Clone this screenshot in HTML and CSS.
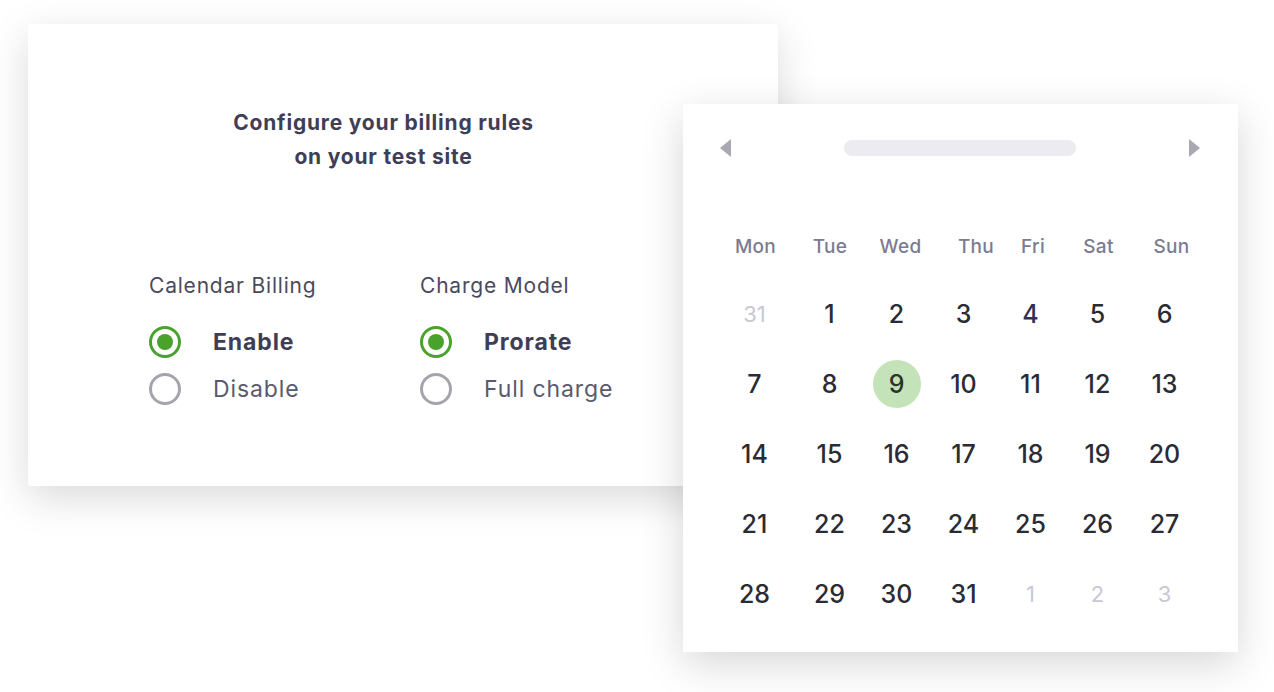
FILE: index.html
```html
<!DOCTYPE html>
<html lang="en">
<head>
    <meta charset="UTF-8">
    <meta name="viewport" content="width=device-width, initial-scale=1.0">
    <title>Billing rules</title>
    <link rel="stylesheet" href="styles.css">
</head>
<body>
    <div class="scene">
        <section class="billing-card">
            <h2 class="billing-title">Configure your billing rules<br>on your test site</h2>
            <div class="options">
                <div class="option-group">
                    <div class="group-label">Calendar Billing</div>
                    <div class="radio-row checked"><span class="radio"></span><span class="radio-text">Enable</span></div>
                    <div class="radio-row"><span class="radio"></span><span class="radio-text">Disable</span></div>
                </div>
                <div class="option-group">
                    <div class="group-label">Charge Model</div>
                    <div class="radio-row checked"><span class="radio"></span><span class="radio-text">Prorate</span></div>
                    <div class="radio-row"><span class="radio"></span><span class="radio-text">Full charge</span></div>
                </div>
            </div>
        </section>

        <section class="calendar-card">
            <div class="cal-nav">
                <span class="arrow arrow-left"></span>
                <span class="month-bar"></span>
                <span class="arrow arrow-right"></span>
            </div>
            <div class="weekdays">
                <span>Mon</span><span>Tue</span><span>Wed</span><span>Thu</span><span>Fri</span><span>Sat</span><span>Sun</span>
            </div>
            <div class="days">
                <span class="muted">31</span><span>1</span><span>2</span><span>3</span><span class="navy">4</span><span>5</span><span>6</span>
                <span>7</span><span>8</span><span class="selected">9</span><span>10</span><span>11</span><span>12</span><span>13</span>
                <span>14</span><span>15</span><span>16</span><span>17</span><span>18</span><span>19</span><span>20</span>
                <span>21</span><span>22</span><span>23</span><span>24</span><span>25</span><span>26</span><span>27</span>
                <span>28</span><span>29</span><span>30</span><span>31</span><span class="muted">1</span><span class="muted">2</span><span class="muted">3</span>
            </div>
        </section>
    </div>
</body>
</html>
```

FILE: styles.css
```css
body {
    margin: 0;
    background: #fff;
    font-family: Inter, "Liberation Sans", sans-serif;
}
.scene {
    position: relative;
    width: 1274px;
    height: 692px;
    padding: 24px 0 0 28px;
    box-sizing: border-box;
    overflow: hidden;
}
.billing-card {
    width: 750px;
    height: 462px;
    box-sizing: border-box;
    padding: 82px 39px 0 0;
    background: #fff;
    border-radius: 3px;
    box-shadow: 0 12px 40px rgba(0, 0, 0, 0.15);
}
.billing-title {
    margin: 0;
    text-align: center;
    font-size: 21px;
    line-height: 34px;
    font-weight: 700;
    color: #3f3e57;
    letter-spacing: 0.8px;
}
.options {
    display: flex;
    margin-top: 98px;
    padding-left: 121px;
}
.option-group {
    width: 271px;
}
.group-label {
    font-size: 21px;
    line-height: 28px;
    letter-spacing: 0.8px;
    color: #4a4a5e;
    margin-bottom: 18px;
}
.radio-row {
    display: flex;
    align-items: center;
    height: 47px;
}
.radio {
    display: flex;
    align-items: center;
    justify-content: center;
    width: 32px;
    height: 32px;
    box-sizing: border-box;
    border: 3px solid #a4a4ac;
    border-radius: 50%;
}
.radio-text {
    margin-left: 32px;
    font-size: 23px;
    letter-spacing: 0.9px;
    color: #5a5a6e;
}
.checked .radio {
    border-color: #48a22b;
}
.checked .radio::after {
    content: "";
    width: 16px;
    height: 16px;
    border-radius: 50%;
    background: #48a22b;
}
.checked .radio-text {
    font-weight: 700;
    color: #3e3d56;
}

.calendar-card {
    position: absolute;
    left: 683px;
    top: 104px;
    width: 555px;
    height: 548px;
    box-sizing: border-box;
    padding-top: 34px;
    background: #fff;
    box-shadow: 0 12px 40px rgba(0, 0, 0, 0.16);
}
.cal-nav {
    display: flex;
    align-items: center;
    justify-content: space-between;
    height: 20px;
    padding: 0 38px 0 37px;
}
.arrow {
    width: 0;
    height: 0;
    border-top: 9px solid transparent;
    border-bottom: 9px solid transparent;
}
.arrow-left {
    border-right: 11px solid #a8a8b0;
}
.arrow-right {
    border-left: 11px solid #a8a8b0;
}
.month-bar {
    width: 232px;
    height: 16px;
    border-radius: 8px;
    background: #ecebf1;
}
.weekdays {
    display: grid;
    grid-template-columns: 85px 64px 77px 74px 40px 91px 55px;
    align-items: center;
    height: 66px;
    margin-top: 55px;
    padding-left: 30px;
}
.weekdays span {
    display: flex;
    justify-content: center;
    font-size: 19px;
    font-weight: 500;
    letter-spacing: 0.3px;
    color: #7b7b92;
}
.days {
    display: grid;
    grid-template-columns: 83px repeat(6, 67px);
    grid-auto-rows: 70px;
    padding-left: 30px;
}
.days span {
    display: flex;
    align-items: center;
    justify-content: center;
    font-size: 25px;
    font-weight: 500;
    color: #2b2b33;
}
.days .muted {
    font-size: 22px;
    font-weight: 400;
    color: #c8c8d2;
}
.days .navy {
    color: #2f2f5a;
}
.days .selected {
    justify-self: center;
    align-self: center;
    width: 48px;
    height: 48px;
    border-radius: 50%;
    background: #c5e3b8;
    color: #27352a;
}
```
